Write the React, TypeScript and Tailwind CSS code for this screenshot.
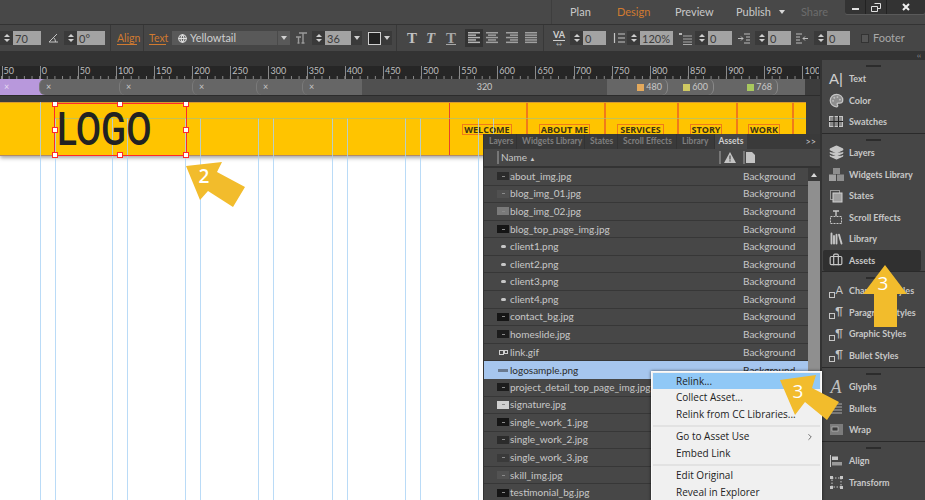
import { Fragment, type ReactNode } from "react";
import {
  Palette,
  Layers,
  Library,
  Briefcase,
  Globe,
  ChevronRight,
} from "lucide-react";

const rulerLabels = [50, 0, 50, 100, 150, 200, 250, 300, 350, 400, 450, 500, 550, 600, 650, 700, 750, 800, 850, 900, 950];
const guides = [40, 55, 112, 127, 185, 200, 258, 273, 332, 347, 405, 420, 478, 493];

const assets = [
  { name: "about_img.jpg", thumb: "bg-[#2b2b2b]" },
  { name: "blog_img_01.jpg", thumb: "bg-[#505050]" },
  { name: "blog_img_02.jpg", thumb: "bg-[#7a7a7a]" },
  { name: "blog_top_page_img.jpg", thumb: "bg-[#151515]" },
  { name: "client1.png", thumb: "small" },
  { name: "client2.png", thumb: "small" },
  { name: "client3.png", thumb: "small" },
  { name: "client4.png", thumb: "small" },
  { name: "contact_bg.jpg", thumb: "bg-[#151515]" },
  { name: "homeslide.jpg", thumb: "bg-[#1c1c1c]" },
  { name: "link.gif", thumb: "link" },
  { name: "logosample.png", thumb: "logo", selected: true },
  { name: "project_detail_top_page_img.jpg", thumb: "bg-[#1c1c1c]" },
  { name: "signature.jpg", thumb: "bg-[#d0d0d0]" },
  { name: "single_work_1.jpg", thumb: "bg-[#151515]" },
  { name: "single_work_2.jpg", thumb: "bg-[#2b2b2b]" },
  { name: "single_work_3.jpg", thumb: "bg-[#3a3a3a]" },
  { name: "skill_img.jpg", thumb: "bg-[#525252]" },
  { name: "testimonial_bg.jpg", thumb: "bg-[#151515]" },
];

function Stepper({ value, width, dropdown }: { value: string; width: number; dropdown?: boolean }) {
  return (
    <div className="flex h-[14px] shrink-0 items-stretch">
      <div className="flex w-[13px] flex-col items-center justify-center gap-[2px] bg-[#3a3a3a]">
        <span className="h-0 w-0 border-x-[3px] border-b-[3px] border-x-transparent border-b-[#cfcfcf]" />
        <span className="h-0 w-0 border-x-[3px] border-t-[3px] border-x-transparent border-t-[#cfcfcf]" />
      </div>
      <div
        className="flex items-center bg-[#a3a3a3] pl-[2px] text-[11px] leading-none text-[#3c3c3c]"
        style={{ width }}
      >
        {value}
      </div>
      {dropdown && <Caret className="w-[11px] bg-[#3a3a3a]" />}
    </div>
  );
}

function Caret({ className }: { className?: string }) {
  return (
    <div className={`flex items-center justify-center ${className ?? ""}`}>
      <span className="h-0 w-0 border-x-[3.5px] border-t-[4px] border-x-transparent border-t-[#d0d0d0]" />
    </div>
  );
}

function Sep({ ml, mr }: { ml: number; mr: number }) {
  return <div className="h-[27px] w-px shrink-0 bg-[#383838]" style={{ marginLeft: ml, marginRight: mr }} />;
}

function AlignIcon({ mode, active }: { mode: "l" | "c" | "r" | "j"; active?: boolean }) {
  const rows = [12, 8, 12, 8, 12];
  return (
    <svg width="12" height="12" viewBox="0 0 12 12" className="shrink-0">
      {rows.map((w, i) => {
        const rw = mode === "j" ? 12 : w;
        const x = mode === "l" || mode === "j" ? 0 : mode === "c" ? (12 - rw) / 2 : 12 - rw;
        return <rect key={i} x={x} y={i * 2.4} width={rw} height="1.5" fill={active ? "#b5b5b5" : "#a0a0a0"} />;
      })}
    </svg>
  );
}

function OptionsBar() {
  return (
    <div className="flex h-[27px] items-center border-t border-[#333] bg-[#464646] text-[11px]">
      <Stepper value="70" width={28} />
      <svg width="11" height="10" viewBox="0 0 11 10" className="ml-[7px] mr-[5px] shrink-0">
        <path d="M1 9 L9 1 M1 9 H10 M6 5 Q7.5 6.5 7.5 9" stroke="#c4c4c4" strokeWidth="1" fill="none" />
      </svg>
      <Stepper value="0°" width={28} />
      <Sep ml={5} mr={6} />
      <span className="w-[20px] shrink-0 border-b border-[#d07a30] text-[10.5px] leading-[12px] text-[#d07a30]">Align</span>
      <Sep ml={6} mr={5} />
      <span className="w-[17px] shrink-0 border-b border-[#d07a30] text-[10.5px] leading-[12px] text-[#d07a30]">Text</span>
      <div className="ml-[6px] flex h-[14px] w-[118px] shrink-0 items-center bg-[#595959] pl-[6px] text-[11px] text-[#cfcfcf]">
        <Globe size={9} className="mr-[3px] text-[#e0e0e0]" strokeWidth={3} />
        <span className="flex-1">Yellowtail</span>
        <Caret className="h-full w-[13px] border-l border-[#4a4a4a]" />
      </div>
      <svg width="13" height="12" viewBox="0 0 13 12" className="ml-[5px] mr-[4px] shrink-0">
        <path d="M4 1 H12 M8 1 V11 M6.5 11 H9.5 M1 5 H6 M3.5 5 V11 M2.5 11 H4.5" stroke="#9a9a9a" strokeWidth="1.4" fill="none" />
      </svg>
      <Stepper value="36" width={26} dropdown />
      <div className="ml-[6px] flex h-[14px] shrink-0 items-center bg-[#3a3a3a]">
        <div className="h-[13px] w-[13px] border border-[#d0d0d0] bg-[#222]" />
        <Caret className="h-full w-[11px]" />
      </div>
      <Sep ml={4} mr={10} />
      <span className="w-[19px] font-['Liberation_Serif'] text-[15px] font-bold leading-none text-[#c2c2c2]">T</span>
      <span className="w-[20px] font-['Liberation_Serif'] text-[15px] font-bold italic leading-none text-[#b8b8b8]">T</span>
      <span className="w-[19px] font-['Liberation_Serif'] text-[15px] font-bold leading-none text-[#a8a8a8] underline">T</span>
      <div className="flex h-[18px] w-[18px] shrink-0 items-center justify-center bg-[#333]">
        <AlignIcon mode="l" active />
      </div>
      <div className="flex w-[55px] shrink-0 justify-between pl-[3px] pr-[1px]">
        <AlignIcon mode="c" />
        <AlignIcon mode="r" />
        <AlignIcon mode="j" />
      </div>
      <Sep ml={5} mr={8} />
      <div className="mr-[4px] flex w-[14px] shrink-0 flex-col items-center">
        <span className="border-b border-[#d0d0d0] text-[9px] font-bold leading-[10px] text-[#d0d0d0]">VA</span>
        <span className="text-[6px] leading-[5px] text-[#c0c0c0]">↔</span>
      </div>
      <Stepper value="0" width={23} />
      <svg width="13" height="12" viewBox="0 0 13 12" className="ml-[6px] mr-[2px] shrink-0">
        <path d="M2.5 1 V11 M6 2 H13 M6 6 H13 M6 10 H13" stroke="#c4c4c4" strokeWidth="1.2" fill="none" />
      </svg>
      <Stepper value="120%" width={33} />
      <svg width="13" height="13" viewBox="0 0 13 13" className="ml-[6px] mr-[3px] shrink-0">
        <path d="M4 4 H13 M4 7 H13 M4 10 H13 M4 12.5 H13" stroke="#a8a8a8" strokeWidth="1" fill="none" />
        <path d="M0 2 H3" stroke="#e0e0e0" strokeWidth="1.5" />
      </svg>
      <Stepper value="0" width={24} />
      <svg width="12" height="11" viewBox="0 0 12 11" className="ml-[6px] mr-[5px] shrink-0">
        <path d="M6 1 H12 M8 4 H12 M8 7 H12 M6 10 H12 M0 5.5 H5 M3 3.5 L5 5.5 L3 7.5" stroke="#bcbcbc" strokeWidth="1" fill="none" />
      </svg>
      <Stepper value="0" width={23} />
      <svg width="12" height="11" viewBox="0 0 12 11" className="ml-[5px] mr-[6px] shrink-0">
        <path d="M0 1 H6 M0 4 H4 M0 7 H4 M0 10 H6 M12 5.5 H7 M9 3.5 L7 5.5 L9 7.5" stroke="#bcbcbc" strokeWidth="1" fill="none" />
      </svg>
      <Stepper value="0" width={23} />
      <div className="ml-[11px] h-[9px] w-[8px] shrink-0 border border-[#333] bg-[#555]" />
      <span className="ml-[4px] text-[11px] text-[#a8a8a8]">Footer</span>
    </div>
  );
}

function Header() {
  return (
    <div className="flex h-[24px] items-center bg-[#484848] text-[11px] text-[#c8c8c8]">
      <div className="ml-[551px] h-[24px] w-px bg-[#3e3e3e]" />
      <span className="ml-[18px] w-[47px]">Plan</span>
      <span className="w-[58px] text-[#d07a30]">Design</span>
      <span className="w-[61px]">Preview</span>
      <span className="w-[34px]">Publish</span>
      <span className="ml-[9px] h-0 w-0 border-x-[3px] border-t-[4px] border-x-transparent border-t-[#d8d8d8]" />
      <span className="ml-[16px] w-[44px] text-[#6c6c6c]">Share</span>
      <div className="flex h-[14px] self-start rounded-b-[2px] bg-[#333] shadow-[0_1px_0_#5a5a5a]">
        <div className="flex w-[21px] items-center justify-center border-r border-[#222]">
          <span className="mt-[3px] h-[2px] w-[7px] bg-[#e0e0e0]" />
        </div>
        <div className="flex w-[21px] items-center justify-center border-r border-[#222]">
          <svg width="10" height="9" viewBox="0 0 10 9">
            <path d="M3.5 .5 H9.5 V5.5 H7 M.5 3.5 H6.5 V8.5 H.5 Z" stroke="#e0e0e0" fill="none" />
          </svg>
        </div>
        <div className="flex w-[38px] items-center justify-center">
          <svg width="8" height="8" viewBox="0 0 8 8">
            <path d="M1 1 L7 7 M7 1 L1 7" stroke="#f0f0f0" strokeWidth="2" />
          </svg>
        </div>
      </div>
    </div>
  );
}

function Ruler() {
  return (
    <div className="relative flex h-[13px] bg-[#262626] pl-[1.5px] text-[9px] leading-[10px] text-[#bdbdbd]">
      {rulerLabels.map((label, i) => (
        <div key={i} className="w-[38.15px] shrink-0 border-l border-[#8a8a8a] pl-[1px]">
          {label}
        </div>
      ))}
      <div className="w-[17px] shrink-0 overflow-hidden whitespace-nowrap border-l border-[#8a8a8a] pl-[1px]">1000</div>
      <svg width="820" height="3" className="absolute bottom-0 left-0">
        {Array.from({ length: 108 }, (_, i) => (
          <line key={i} x1={1.5 + i * 7.63} x2={1.5 + i * 7.63} y1={0} y2={3} stroke="#8a8a8a" />
        ))}
      </svg>
    </div>
  );
}

function Segment({ w, children, left }: { w: number; children?: ReactNode; left?: boolean }) {
  return (
    <div
      className={`flex h-full shrink-0 items-center bg-[#666] pl-[3px] text-[9px] text-[#c8c8c8] ${left ? "rounded-l-[6px] border-l border-[#7a7a7a]" : ""}`}
      style={{ width: w }}
    >
      {children}
    </div>
  );
}

function Breakpoints() {
  return (
    <div className="flex h-[16px] bg-[#3c3c3c]">
      <div className="flex w-[40px] shrink-0 items-center bg-[#b898dc] pl-[4px] text-[9px] text-[#e6dcf2]">×</div>
      <div className="-ml-[1px] flex shrink-0 bg-[#b898dc]">
        <Segment w={80} left>
          <span className="ml-[3px] text-[#cfcfcf]">×</span>
        </Segment>
      </div>
      <div className="flex shrink-0 bg-[#666]">
        <Segment w={73} left>
          <span className="ml-[3px]">×</span>
        </Segment>
        <Segment w={64} left>
          <span className="ml-[3px]">×</span>
        </Segment>
        <Segment w={46} left>
          <span className="ml-[3px]">×</span>
        </Segment>
        <Segment w={60} left>
          <span className="ml-[3px]">×</span>
        </Segment>
      </div>
      <div className="flex w-[245px] shrink-0 items-center justify-center bg-[#505050] text-[9px] text-[#c8c8c8]">320</div>
      <div className="flex w-[198px] shrink-0 bg-[#666]">
        <div className="flex w-[61px] items-center justify-end rounded-r-[6px] border-r border-[#8a8a8a] pr-[5px] text-[9px] text-[#c8c8c8]">
          <span className="mr-[2px] h-[7px] w-[7px] bg-[#e3a95c]" />
          480
        </div>
        <div className="flex w-[46px] items-center justify-end rounded-r-[6px] border-r border-[#8a8a8a] pr-[5px] text-[9px] text-[#c8c8c8]">
          <span className="mr-[2px] h-[7px] w-[7px] bg-[#cfc962]" />
          600
        </div>
        <div className="flex w-[64px] items-center justify-end rounded-r-[6px] border-r border-[#8a8a8a] pr-[5px] text-[9px] text-[#c8c8c8]">
          <span className="mr-[2px] h-[7px] w-[7px] bg-[#a8c85e]" />
          768
        </div>
      </div>
    </div>
  );
}

function Handle({ className }: { className: string }) {
  return <span className={`absolute h-[6px] w-[6px] border border-[#ff2a2a] bg-white ${className}`} />;
}

function NavItem({ label, ml, w }: { label: string; ml: number; w: number }) {
  return (
    <div
      className="mt-[21px] flex h-[11px] shrink-0 items-center justify-center whitespace-nowrap border border-[#ef7a1a] text-[9px] font-bold leading-none text-[#3b3215]"
      style={{ marginLeft: ml, width: w }}
    >
      {label}
    </div>
  );
}

function Canvas() {
  return (
    <div className="relative flex h-full flex-1 bg-[#3c3c3c]">
      <div className="relative w-[806px] shrink-0 overflow-hidden bg-white">
        <div className="flex h-[54px] border-y border-y-[#b08a6a] border-t-[#d89a30] bg-[#ffc400] pl-[54px] font-['Open_Sans'] shadow-[0_2px_4px_rgba(0,0,0,0.35)]">
          <div className="relative z-10 h-[53px] w-[133px] shrink-0 border-[1.5px] border-[#ff2a2a]">
            <span className="absolute left-[2px] top-[-3px] origin-left scale-x-[0.8] font-['Roboto'] text-[46px] font-medium leading-[56px] text-[#222]">
              LOGO
            </span>
            <Handle className="-left-[3px] -top-[3px]" />
            <Handle className="left-[62px] -top-[3px]" />
            <Handle className="-right-[3px] -top-[3px]" />
            <Handle className="-left-[3px] top-[23px]" />
            <Handle className="-right-[3px] top-[23px]" />
            <Handle className="-bottom-[3px] -left-[3px]" />
            <Handle className="-bottom-[3px] left-[62px]" />
            <Handle className="-bottom-[3px] -right-[3px]" />
          </div>
          <div className="ml-[262px] w-px shrink-0 bg-[#e8432a]" />
          <NavItem label="WELCOME" ml={12} w={50} />
          <div className="ml-[14px] w-[2px] shrink-0 bg-[#f07a1a]" />
          <NavItem label="ABOUT ME" ml={11} w={51} />
          <div className="ml-[14px] w-[2px] shrink-0 bg-[#f07a1a]" />
          <NavItem label="SERVICES" ml={11} w={47} />
          <div className="ml-[13px] w-[2px] shrink-0 bg-[#f07a1a]" />
          <NavItem label="STORY" ml={11} w={32} />
          <div className="ml-[14px] w-[2px] shrink-0 bg-[#f07a1a]" />
          <NavItem label="WORK" ml={10} w={32} />
          <div className="ml-[12px] w-[2px] shrink-0 bg-[#f07a1a]" />
        </div>
        {guides.map((x) => (
          <div
            key={x}
            className={`absolute bottom-0 w-px bg-[#a9d2f5]/80 ${x === 40 ? "top-0" : "top-[16px]"}`}
            style={{ left: x }}
          />
        ))}
        <div className="absolute left-[55px] right-0 top-[16px] h-px bg-[#a9c27a]/70" />
      </div>
    </div>
  );
}

function Thumb({ kind }: { kind: string }) {
  if (kind === "small") {
    return (
      <div className="flex w-[12px] items-center justify-center">
        <span className="h-[3px] w-[5px] rounded-full bg-[#c8c8c8]" />
      </div>
    );
  }
  if (kind === "link") {
    return (
      <div className="flex w-[12px] items-center justify-center">
        <span className="h-[5px] w-[5px] border border-[#d0d0d0]" />
        <span className="h-[4px] w-[4px] border border-[#d0d0d0]" />
      </div>
    );
  }
  if (kind === "logo") {
    return (
      <div className="flex w-[12px] items-center justify-center">
        <span className="h-[3px] w-[10px] bg-[#6a7a90]" />
      </div>
    );
  }
  return (
    <div className={`flex h-[8px] w-[12px] items-center justify-center ${kind}`}>
      <span className="h-px w-[3px] bg-[#8a8a8a]" />
    </div>
  );
}

function AssetsPanel() {
  return (
    <div className="absolute bottom-0 left-[483px] top-[134px] flex w-[337px] flex-col border-l border-[#333] bg-[#474747] font-['Lato'] text-[10px] text-[#c8c8c8]">
      <div className="flex h-[15px] items-center bg-[#3a3a3a] text-[8.5px] font-bold text-[#7f7f7f]">
        {(
          [
            ["Layers", 33],
            ["Widgets Library", 68],
            ["States", 33],
            ["Scroll Effects", 59],
            ["Library", 38],
          ] as [string, number][]
        ).map(([label, w]) => (
          <div key={label} className="flex h-full items-center whitespace-nowrap border-r border-[#333] pl-[5px]" style={{ width: w }}>
            {label}
          </div>
        ))}
        <div className="flex h-full w-[32px] items-center justify-center bg-[#474747] text-[#d0d0d0]">Assets</div>
        <span className="ml-auto mr-[4px] text-[9px] font-normal text-[#c8c8c8]">&gt;&gt;</span>
      </div>
      <div className="flex h-[19px] items-center border-b-2 border-[#333] pl-[13px]">
        <div className="h-[13px] w-[2px] bg-[#777]" />
        <span className="ml-[2px] w-[195px] text-[#c8c8c8]">
          Name <span className="text-[6px]">▲</span>
        </span>
        <div className="ml-[23px] h-[13px] w-[2px] bg-[#777]" />
        <svg width="12" height="11" viewBox="0 0 12 11" className="ml-[3px]">
          <path d="M6 0 L12 11 H0 Z" fill="#c4c4c4" />
          <rect x="5.4" y="3.5" width="1.2" height="4" fill="#444" />
          <rect x="5.4" y="8.3" width="1.2" height="1.2" fill="#444" />
        </svg>
        <div className="ml-[7px] h-[13px] w-[2px] bg-[#777]" />
        <svg width="9" height="11" viewBox="0 0 9 11" className="ml-[1px]">
          <path d="M0 0 H6 L9 3 V11 H0 Z" fill="#c4c4c4" />
        </svg>
      </div>
      <div className="flex min-h-0 flex-1">
        <div className="w-[324px] shrink-0 overflow-hidden">
          {assets.map((a) => (
            <div
              key={a.name}
              className={`flex h-[17.58px] items-center pl-[13px] ${
                a.selected ? "bg-[#a6c6ee] text-[#2c2c2c]" : "border-b border-[#373737]"
              }`}
            >
              <Thumb kind={a.thumb} />
              <span className="ml-[1px] w-[233px] whitespace-nowrap">{a.name}</span>
              <span>Background</span>
            </div>
          ))}
        </div>
        <div className="flex-1 bg-[#8f8f8f]">
          <div className="flex h-[13px] items-center justify-center bg-[#3a3a3a]">
            <span className="h-0 w-0 border-x-[3px] border-b-[4px] border-x-transparent border-b-[#d8d8d8]" />
          </div>
        </div>
      </div>
      <ContextMenu />
    </div>
  );
}

function ContextMenu() {
  const items: (string | null)[] = [
    "Collect Asset...",
    "Relink from CC Libraries...",
    null,
    "Go to Asset Use",
    "Embed Link",
    null,
    "Edit Original",
    "Reveal in Explorer",
  ];
  return (
    <div className="absolute left-[167px] top-[237px] w-[171px] border border-[#fafafa] bg-[#f0f0f0] p-[1px] font-['Open_Sans'] text-[10px] text-[#222] shadow-[0_0_3px_rgba(0,0,0,0.6)]">
      <div className="flex h-[16px] items-center bg-[#90c8f6] pl-[23px]">Relink...</div>
      {items.map((item, i) =>
        item === null ? (
          <div key={i} className="my-[1.5px] h-[2px] bg-[#e2e2e2]" />
        ) : (
          <div key={i} className="flex h-[17px] items-center pl-[23px]">
            <span className="flex-1">{item}</span>
            {item === "Go to Asset Use" && <ChevronRight size={10} className="mr-[5px] text-[#555]" />}
          </div>
        ),
      )}
    </div>
  );
}

const ic = "#c6c6c6";

const dockIcons: Record<string, ReactNode> = {
  Text: <span className="font-['Liberation_Sans'] text-[15px] font-normal leading-none text-[#d0d0d0]">A|</span>,
  Color: <Palette size={15} color={ic} fill="#8e8e8e" />,
  Swatches: (
    <svg width="14" height="11" viewBox="0 0 14 11">
      <rect x=".5" y=".5" width="13" height="10" fill="#8a8a8a" stroke={ic} />
      <path d="M5 0 V11 M9.5 0 V11 M0 5.5 H14" stroke="#222" />
    </svg>
  ),
  Layers: <Layers size={15} color={ic} fill="#c6c6c6" />,
  "Widgets Library": (
    <svg width="15" height="13" viewBox="0 0 15 13">
      <rect x="4" y="0" width="7" height="6" fill="#8e8e8e" />
      <rect x="0" y="6.5" width="7" height="6.5" fill="#a0a0a0" />
      <rect x="8" y="6.5" width="7" height="6.5" fill="#8e8e8e" />
    </svg>
  ),
  States: (
    <svg width="14" height="14" viewBox="0 0 14 14">
      <rect x="1.5" y="1.5" width="9" height="9" fill="none" stroke="#9a9a9a" />
      <rect x="4" y="4" width="9" height="9" fill="#a0a0a0" stroke="#d0d0d0" />
    </svg>
  ),
  "Scroll Effects": (
    <svg width="14" height="15" viewBox="0 0 14 15">
      <path d="M4 1 H10 M7 1 V6" stroke={ic} strokeWidth="1.4" />
      <rect x="1.5" y="6.5" width="11" height="7" fill="none" stroke={ic} strokeDasharray="2 1" />
    </svg>
  ),
  Library: <Library size={15} color={ic} strokeWidth={3} />,
  Assets: <Briefcase size={14} color={ic} />,
  Glyphs: <span className="font-['Liberation_Serif'] text-[18px] font-normal italic leading-none text-[#c0c0c0]">A</span>,
  Wrap: (
    <svg width="13" height="11" viewBox="0 0 13 11">
      <rect width="13" height="11" fill="#7c7c7c" />
      <rect x="2" y="3" width="6" height="4" fill="#3c3c3c" stroke="#ccc" strokeWidth=".6" />
    </svg>
  ),
  Bullets: (
    <svg width="12" height="11" viewBox="0 0 12 11">
      <path d="M0 1 H12 M0 4 H12 M0 7 H12 M0 10 H12" stroke="#8a8a8a" strokeWidth="1.5" />
    </svg>
  ),
  Align: (
    <svg width="12" height="12" viewBox="0 0 12 12">
      <path d="M.5 0 V12" stroke={ic} />
      <rect x="2" y="1.5" width="6" height="3.5" fill={ic} />
      <rect x="2" y="7" width="10" height="3.5" fill="#9a9a9a" />
    </svg>
  ),
  Transform: (
    <svg width="13" height="13" viewBox="0 0 13 13">
      <rect x="2" y="2" width="9" height="9" fill="none" stroke={ic} strokeDasharray="1.5 1.5" />
      <path d="M0 0 H3 V3 H0 Z M10 0 H13 V3 H10 Z M0 10 H3 V13 H0 Z M10 10 H13 V13 H10 Z" fill={ic} />
    </svg>
  ),
};

function StyleIcon({ letter }: { letter: string }) {
  return (
    <div className="relative h-[14px] w-[14px]">
      <span className="absolute bottom-0 left-0 h-[6px] w-[6px] border border-[#c6c6c6]" />
      <span className="absolute right-0 top-0 text-[11px] font-normal leading-[11px] text-[#c6c6c6]">{letter}</span>
    </div>
  );
}

const dockGroups: { items: string[]; h: number }[] = [
  { items: ["Text", "Color", "Swatches"], h: 74 },
  { items: ["Layers", "Widgets Library", "States", "Scroll Effects", "Library", "Assets"], h: 138 },
  { items: ["Character Styles", "Paragraph Styles", "Graphic Styles", "Bullet Styles"], h: 96 },
  { items: ["Glyphs", "Bullets", "Wrap"], h: 74 },
];

function Dock() {
  return (
    <div className="flex w-[105px] shrink-0 flex-col overflow-hidden bg-[#333] font-['Lato'] text-[9px] font-bold text-[#c8c8c8]">
      <div className="flex h-[9px] shrink-0 items-center justify-end pr-[4px] text-[7px] font-normal leading-none text-[#a8a8a8]">‹‹</div>
      {dockGroups.map((group) => (
        <div
          key={group.items[0]}
          className="ml-[2px] flex shrink-0 flex-col border-b border-[#2a2a2a] bg-[#464646] pt-[5px]"
          style={{ height: group.h }}
        >
          <div className="mx-auto mb-[1px] h-[2px] w-[15px] shrink-0 bg-[#2c2c2c]" />
          {group.items.map((name) => (
            <Fragment key={name}>
              <div
                className={`ml-[1px] mr-[4px] flex h-[21.5px] shrink-0 items-center rounded-[2px] pl-[3px] ${
                  name === "Assets" ? "bg-[#303030]" : ""
                }`}
              >
                <div className="flex w-[20px] shrink-0 items-center justify-center">
                  {dockIcons[name] ?? <StyleIcon letter={name === "Character Styles" ? "A" : "¶"} />}
                </div>
                <span className="ml-[3px] whitespace-nowrap">{name}</span>
              </div>
            </Fragment>
          ))}
        </div>
      ))}
      <div className="ml-[2px] flex flex-1 flex-col bg-[#464646] pt-[5px]">
        <div className="mx-auto mb-[1px] h-[2px] w-[15px] shrink-0 bg-[#2c2c2c]" />
        {["Align", "Transform"].map((name) => (
          <div key={name} className="ml-[1px] flex h-[21.5px] shrink-0 items-center pl-[3px]">
            <div className="flex w-[20px] shrink-0 items-center justify-center">{dockIcons[name]}</div>
            <span className="ml-[3px] whitespace-nowrap">{name}</span>
          </div>
        ))}
      </div>
    </div>
  );
}

function Arrows() {
  return (
    <svg width="925" height="500" className="pointer-events-none absolute left-0 top-0">
      <g fill="#f2bc2c">
        <polygon points="186,166 222,162 217,172 245,187 233,207 208,191 200,200" />
        <polygon points="885,265 907,294 897,294 897,327 874,327 874,294 863,294" />
        <polygon points="780,380 816,375 812,388 839,402 827,420 805,402 795,415" />
      </g>
      <g fill="#fff" fontFamily="Open Sans" fontSize="19" textAnchor="middle">
        <text x="204" y="183" fontWeight="600">2</text>
        <text x="883" y="290">3</text>
        <text x="798" y="398">3</text>
      </g>
    </svg>
  );
}

export default function App() {
  return (
    <div className="relative flex h-[500px] w-[925px] flex-col overflow-hidden bg-[#464646] font-['Lato',sans-serif]">
      <Header />
      <OptionsBar />
      <div className="flex min-h-0 flex-1">
        <div className="relative flex w-[820px] shrink-0 flex-col overflow-hidden">
          <div className="h-[15px] shrink-0 bg-[#333]" />
          <Ruler />
          <Breakpoints />
          <div className="h-[7px] shrink-0 border-t border-[#2c2c2c] bg-[#3c3c3c]" />
          <div className="min-h-0 flex-1">
            <Canvas />
          </div>
        </div>
        <Dock />
      </div>
      <AssetsPanel />
      <Arrows />
    </div>
  );
}
